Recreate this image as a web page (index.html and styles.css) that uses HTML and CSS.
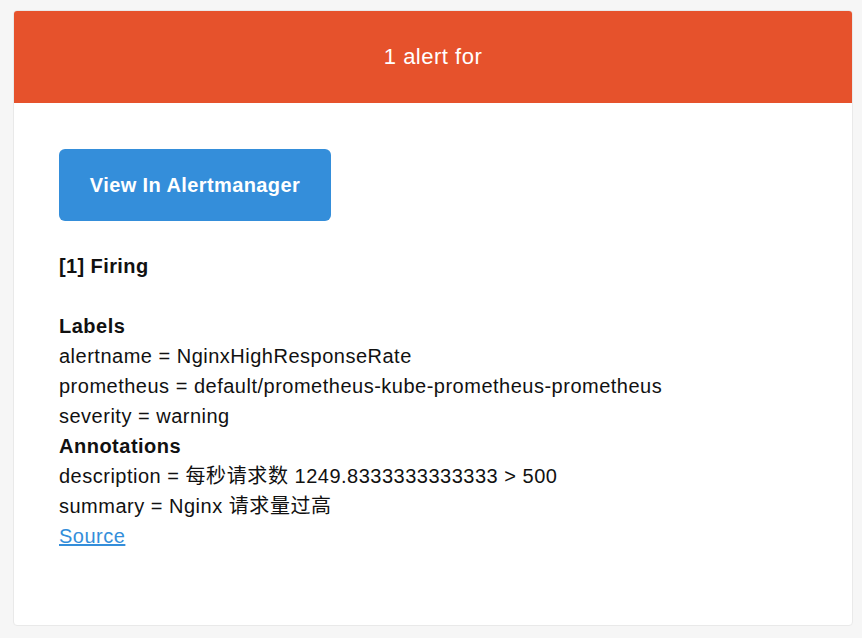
FILE: index.html
```html
<!DOCTYPE html>
<html>
<head>
<meta charset="utf-8">
<link rel="stylesheet" href="styles.css">
</head>
<body>
<div class="main">
  <div class="alert">1 alert for</div>
  <div class="content">
    <a class="btn" href="#">View In Alertmanager</a>
    <div class="firing"><strong>[1] Firing</strong></div>
    <div class="lines">
      <strong>Labels</strong><br>
      alertname = NginxHighResponseRate<br>
      prometheus = default/prometheus-kube-prometheus-prometheus<br>
      severity = warning<br>
      <strong>Annotations</strong><br>
      description = <span class="cjk">每秒请求数</span> 1249.8333333333333 &gt; 500<br>
      summary = Nginx <span class="cjk">请求量过高</span><br>
      <a class="src" href="#">Source</a>
    </div>
  </div>
</div>
</body>
</html>
```

FILE: styles.css
```css
html, body {
  margin: 0;
  padding: 0;
  background: #f6f6f6;
}
body {
  padding: 10px 9px 11px 13px;
  font-family: "Liberation Sans", Arial, "Noto Sans CJK SC", sans-serif;
  font-size: 20px;
  color: #111;
}
.main {
  width: 838px;
  background: #fff;
  border: 1px solid #e9e9e9;
  border-radius: 4px;
  overflow: hidden;
  box-sizing: content-box;
}
.alert {
  background: #e6522c;
  color: #fff;
  font-size: 22px;
  text-align: center;
  height: 92px;
  line-height: 92px;
  letter-spacing: 0.5px;
}
.content {
  padding: 46px 45px 74px 45px;
}
.btn {
  display: inline-flex;
  align-items: center;
  justify-content: center;
  width: 272px;
  height: 72px;
  background: #348eda;
  color: #fff;
  font-weight: bold;
  font-size: 20px;
  letter-spacing: 0.4px;
  text-decoration: none;
  border-radius: 6px;
}
.firing {
  margin-top: 30px;
  line-height: 30px;
  margin-bottom: 30px;
  letter-spacing: 0.4px;
}
.lines {
  line-height: 30px;
  letter-spacing: 0.5px;
}
.cjk {
  letter-spacing: 0.6px;
}
.src {
  color: #348eda;
  text-decoration: underline;
}
```
